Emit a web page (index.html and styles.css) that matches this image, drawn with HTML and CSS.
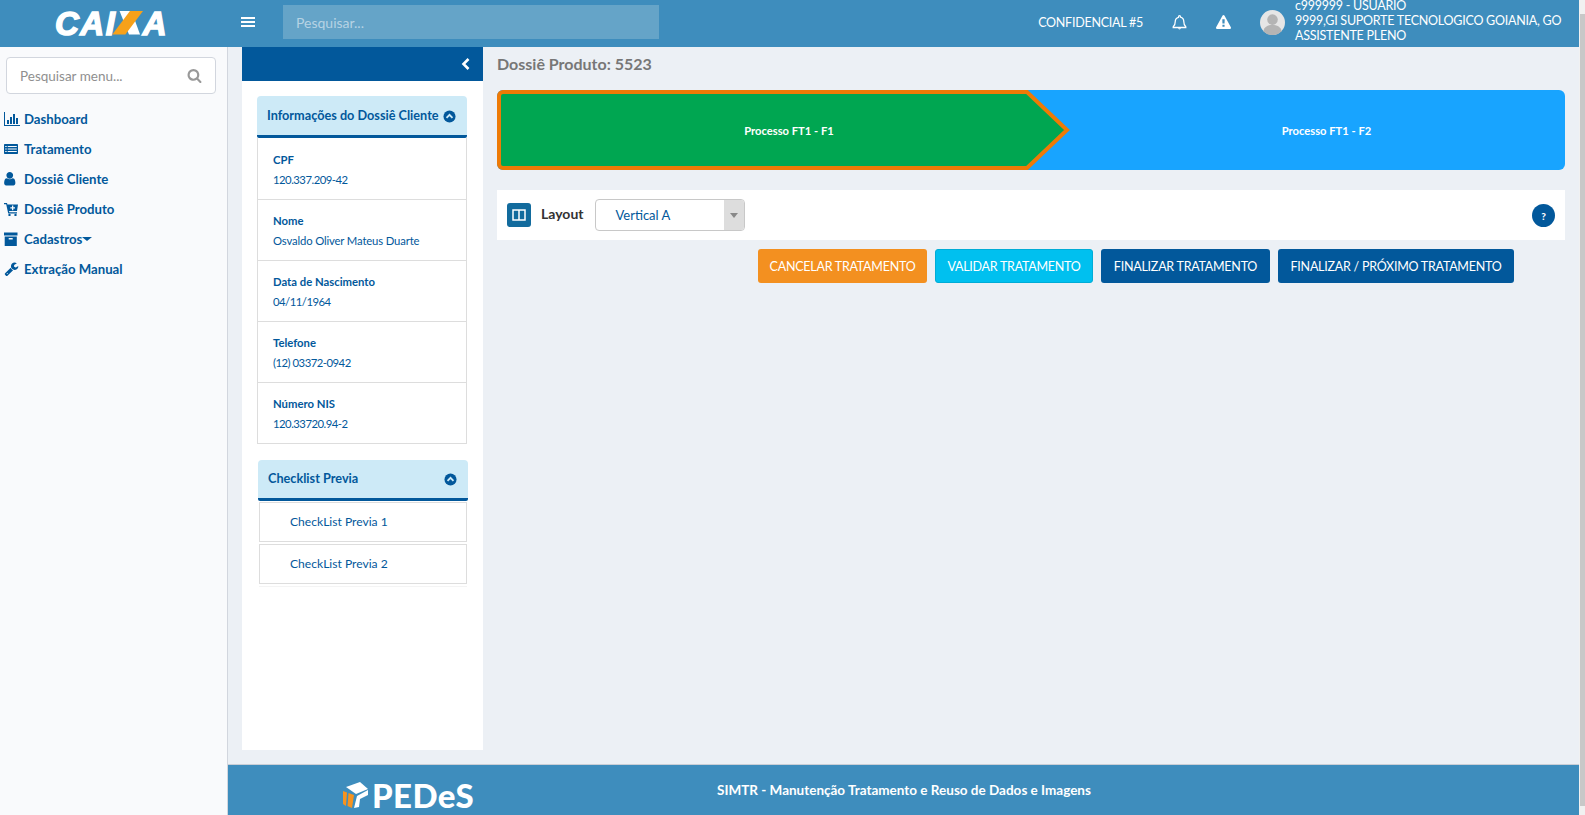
FILE: index.html
```html
<!DOCTYPE html>
<html lang="pt-BR">
<head>
    <meta charset="UTF-8">
    <meta name="viewport" content="width=device-width, initial-scale=1.0">
    <title>Dossiê Produto</title>
    <link rel="stylesheet" href="styles.css">
</head>
<body>
<div class="window">
    <div class="page">
        <header class="topbar">
            <div class="brand"><span class="brand-text">CAI<span class="brand-x">X</span>A</span></div>
            <button class="burger" type="button"><span></span><span></span><span></span></button>
            <input class="top-search" type="text" placeholder="Pesquisar...">
            <div class="top-right">
                <span class="confidencial">CONFIDENCIAL #5</span>
                <svg class="top-icon bell" viewBox="2 1.500 20 21"><path d="M12 2.500c.8 0 1.400.6 1.400 1.400v.5c3 .7 4.600 3.200 4.600 6.300 0 4 1 5.800 2.800 7.300v1H3.200v-1C5 16.700 6 14.900 6 11c0-3.100 1.600-5.600 4.600-6.300v-.5c0-.8.6-1.700 1.400-1.700z" fill="none" stroke="#fff" stroke-width="1.800"/><path d="M9.800 20a2.300 2.300 0 0 0 4.400 0z" fill="#fff"/></svg>
                <svg class="top-icon warn" viewBox="0 0 1792 1792"><path fill="#fff" d="M1024 1375v-190q0-14-9.500-23.500t-22.500-9.500h-192q-13 0-22.500 9.500t-9.500 23.500v190q0 14 9.500 23.500t22.500 9.500h192q13 0 22.500-9.500t9.500-23.500zm-2-374l18-459q0-12-10-19-13-11-24-11h-220q-11 0-24 11-10 7-10 21l17 457q0 10 10 16.500t24 6.500h185q14 0 23.500-6.500t10.500-16.500zm-14-934l768 1408q35 63-2 126-17 29-46.500 46t-63.500 17h-1536q-34 0-63.500-17t-46.500-46q-37-63-2-126l768-1408q17-31 47-49t65-18 65 18 47 49z"/></svg>
                <svg class="avatar" viewBox="0 0 26 26"><circle cx="13" cy="13" r="13" fill="#e6e6e6"/><circle cx="13" cy="10" r="5.500" fill="#b4b4b4"/><path d="M3.500 22c1-5 5-6.500 9.500-6.500s8.500 1.500 9.500 6.500a13 13 0 0 1-19 0z" fill="#b4b4b4"/></svg>
                <div class="user-info">
                    <div>c999999 - USUARIO</div>
                    <div>9999,GI SUPORTE TECNOLOGICO GOIANIA, GO</div>
                    <div>ASSISTENTE PLENO</div>
                </div>
            </div>
        </header>

        <div class="app">
            <aside class="sidebar">
                <div class="menu-search">
                    <input type="text" placeholder="Pesquisar menu...">
                    <svg viewBox="0 0 1792 1792"><path fill="#999" d="M1216 832q0-185-131.500-316.500t-316.500-131.500-316.500 131.500-131.500 316.500 131.500 316.500 316.500 131.500 316.500-131.500 131.500-316.500zm512 832q0 52-38 90t-90 38q-54 0-90-38l-343-342q-179 124-399 124-143 0-273.500-55.500t-225-150-150-225-55.500-273.500 55.500-273.500 150-225 225-150 273.500-55.500 273.500 55.500 225 150 150 225 55.500 273.500q0 220-124 399l343 343q37 37 37 90z"/></svg>
                </div>
                <ul class="menu">
                    <li><svg viewBox="0 0 16 14"><path d="M0 0h1v13h15v1H0z"/><path d="M3 8h2v4H3zM6 5h2v7H6zM9 2h2v10H9zM12 6h2v6h-2z"/></svg>Dashboard</li>
                    <li><svg viewBox="0 0 16 14"><path fill-rule="evenodd" d="M.800 2h12.400a.8.8 0 0 1 .8.8v8.400a.8.8 0 0 1-.8.8H.800a.8.8 0 0 1-.8-.8V2.800a.8.8 0 0 1 .8-.8zM1.200 4v1h1.500V4zm2.500 0v1h9.100V4zM1.200 6.500v1h1.500v-1zm2.500 0v1h9.100v-1zM1.200 9v1h1.500V9zm2.500 0v1h9.100V9z"/></svg>Tratamento</li>
                    <li><svg viewBox="256 128 1792 1600"><path d="M1536 1399q0 109-62.500 187t-150.500 78h-854q-88 0-150.500-78t-62.500-187q0-85 8.500-160.500t31.500-152 58.500-131 94-89 134.500-34.500q131 128 313 128t313-128q76 0 134.500 34.500t94 89 58.500 131 31.500 152 8.500 160.500zm-256-887q0 159-112.500 271.500t-271.500 112.500-271.500-112.500-112.500-271.500 112.500-271.500 271.500-112.500 271.500 112.500 112.500 271.500z"/></svg>Dossiê Cliente</li>
                    <li><svg viewBox="0 0 16 14"><path fill-rule="evenodd" d="M0 1h3l.4 1.500H14l-1 6.500H5l.3 1.300H13v1.200H4.200L2.200 2.300H0zM8 3.500v1.700H6.300v1.300H8v1.700h1.300V6.500H11V5.200H9.300V3.500z"/><circle cx="5.500" cy="13" r="1.200"/><circle cx="11.500" cy="13" r="1.200"/></svg>Dossiê Produto</li>
                    <li><svg viewBox="0 0 16 14"><path fill-rule="evenodd" d="M0 .500h13.500v3H0zM.700 4.500h12.100V14H.700zM4.700 6v1.500h4V6z"/></svg>Cadastros<span class="caret"></span></li>
                    <li><svg viewBox="64 64 1792 1700"><path d="M448 1472q0-26-19-45t-45-19-45 19-19 45 19 45 45 19 45-19 19-45zm644-420l-682 682q-37 37-90 37-52 0-91-37l-106-108q-38-36-38-90 0-53 38-91l681-681q39 98 114.500 173.500t173.500 114.500zm634-435q0 39-23 106-47 134-164.500 217.500t-258.500 83.500q-185 0-316.500-131.500t-131.500-316.500 131.500-316.500 316.500-131.500q58 0 121.500 16.500t107.500 46.500q16 11 16 28t-16 28l-293 169v224l193 107q5-3 79-48.500t135.500-81 70.500-35.500q15 0 23.500 10t8.500 25z"/></svg>Extração Manual</li>
                </ul>
            </aside>

            <div class="workspace">
                <div class="work-row">
                    <section class="panel">
                        <div class="panel-bar"><svg viewBox="0 0 10 14"><path d="M7.500 2 2.500 7l5 5" fill="none" stroke="#fff" stroke-width="2.600"/></svg></div>
                        <div class="panel-body">
                            <div class="acc-head">
                                <span>Informações do Dossiê Cliente</span>
                                <svg class="chevron" viewBox="0 0 14 14"><circle cx="7" cy="7" r="6.500"/><path d="M3.800 8.500 7 5.300l3.200 3.200" fill="none" stroke="#cdeaf7" stroke-width="2"/></svg>
                            </div>
                            <dl class="info">
                                <div class="info-row"><dt>CPF</dt><dd class="num">120.337.209-42</dd></div>
                                <div class="info-row"><dt>Nome</dt><dd>Osvaldo Oliver Mateus Duarte</dd></div>
                                <div class="info-row"><dt>Data de Nascimento</dt><dd class="num">04/11/1964</dd></div>
                                <div class="info-row"><dt>Telefone</dt><dd class="num">(12) 03372-0942</dd></div>
                                <div class="info-row"><dt>Número NIS</dt><dd class="num">120.33720.94-2</dd></div>
                            </dl>
                            <div class="acc-head checklist-head">
                                <span>Checklist Previa</span>
                                <svg class="chevron" viewBox="0 0 14 14"><circle cx="7" cy="7" r="6.500"/><path d="M3.800 8.500 7 5.300l3.200 3.200" fill="none" stroke="#cdeaf7" stroke-width="2"/></svg>
                            </div>
                            <ul class="checklist">
                                <li>CheckList Previa 1</li>
                                <li>CheckList Previa 2</li>
                            </ul>
                        </div>
                    </section>

                    <main class="main">
                        <h1 class="title">Dossiê Produto: 5523</h1>
                        <div class="stepper">
                            <div class="step step-active">
                                <svg class="step-arrow" viewBox="0 0 574 80"><path d="M6 2H530L570 40 530 78H6a4 4 0 0 1-4-4V6a4 4 0 0 1 4-4z" fill="#00a651" stroke="#ee7a06" stroke-width="4"/></svg>
                                <span class="step-label">Processo FT1 - F1</span>
                            </div>
                            <div class="step step-next"><span class="step-label">Processo FT1 - F2</span></div>
                        </div>
                        <div class="layout-bar">
                            <span class="layout-icon"><svg viewBox="0 0 14 12"><path d="M1 1h12v10H1zM7 1v10" fill="none" stroke="#fff" stroke-width="1.500"/></svg></span>
                            <label class="layout-label">Layout</label>
                            <div class="select"><span>Vertical A</span><span class="select-arrow"></span></div>
                            <span class="help">?</span>
                        </div>
                        <div class="actions">
                            <button class="btn btn-cancel" type="button">CANCELAR TRATAMENTO</button>
                            <button class="btn btn-validate" type="button">VALIDAR TRATAMENTO</button>
                            <button class="btn btn-finish" type="button">FINALIZAR TRATAMENTO</button>
                            <button class="btn btn-finish btn-next" type="button">FINALIZAR / PRÓXIMO TRATAMENTO</button>
                        </div>
                    </main>
                </div>
                <footer class="footer">
                    <div class="footer-logo">
                        <svg viewBox="0 0 26 26"><path d="M3 5 17 0l8 7-12 5z" fill="#fff"/><path d="M0 9l4 1.500L3 24l-3-2zM5.500 11 11 13 9 26l-4.500-2z" fill="#f7931e"/><path d="M14 14 25 8v5l-8 4-1 8-5 1z" fill="#fff"/></svg>
                        <span>PEDeS</span>
                    </div>
                    <div class="footer-text">SIMTR - Manutenção Tratamento e Reuso de Dados e Imagens</div>
                </footer>
            </div>
        </div>
    </div>
    <div class="scrollbar"><div class="scroll-thumb"></div></div>
</div>
</body>
</html>
```

FILE: styles.css
```css
html, body {
    margin: 0;
    height: 100%;
    overflow: hidden;
}

body {
    font-family: "Lato", "Open Sans", sans-serif;
    font-size: 13px;
    color: #02589b;
}

ul, dl, dd, h1 {
    margin: 0;
    padding: 0;
    list-style: none;
}

.window {
    display: flex;
    height: 815px;
}

.page {
    flex: 1;
    min-width: 0;
    display: flex;
    flex-direction: column;
}

.scrollbar {
    width: 6px;
    padding: 14px 0 0 1px;
    box-sizing: border-box;
    background-color: #f1f1f1;
}

.scroll-thumb {
    height: 792px;
    background-color: #c8c8c8;
}

/* top bar */
.topbar {
    height: 47px;
    flex: none;
    box-sizing: border-box;
    padding-bottom: 3px;
    display: flex;
    align-items: center;
    background-color: #3e8dbd;
    color: #fff;
}

.brand {
    width: 226px;
    padding: 3px 0 0 55px;
    box-sizing: border-box;
    flex: none;
}

.brand-text {
    font-family: "Liberation Sans", sans-serif;
    font-size: 33px;
    line-height: 40px;
    font-weight: bold;
    font-style: italic;
    letter-spacing: 1.500px;
    -webkit-text-stroke: 1.500px #fff;
    display: block;
}

/* the X of the logo is two bars, white under orange */
.brand-x {
    position: relative;
    margin-left: 3px;
    color: transparent;
    -webkit-text-stroke: 0 transparent;
}

.brand-x::before,
.brand-x::after {
    content: "";
    position: absolute;
    top: 6px;
    height: 24px;
}

.brand-x::before {
    left: 0;
    width: 23px;
    background-color: #fff;
    clip-path: polygon(0 0, 52% 0, 90% 100%, 42% 100%);
}

.brand-x::after {
    left: -7px;
    width: 31px;
    background-color: #f7a11a;
    clip-path: polygon(58% 0, 100% 0, 42% 100%, 0 100%);
}

.burger {
    width: 14px;
    margin-left: 15px;
    padding: 0;
    background: none;
    border: none;
    display: flex;
    flex-direction: column;
    gap: 2px;
}

.burger span {
    height: 2px;
    background-color: #fff;
}

.top-search {
    width: 376px;
    height: 34px;
    margin-left: 28px;
    padding: 0 13px;
    box-sizing: border-box;
    border: none;
    outline: none;
    background-color: #65a4c8;
    font: inherit;
    font-size: 14px;
    color: #fff;
}

.top-search::placeholder {
    color: #b6d3e4;
}

.top-right {
    margin-left: auto;
    display: flex;
    align-items: center;
}

.confidencial {
    font-size: 12.500px;
    letter-spacing: -0.250px;
    margin-right: 29px;
}

.top-icon {
    width: 15px;
    height: 15px;
    margin-right: 29px;
}

.avatar {
    width: 25px;
    height: 25px;
    margin-right: 10px;
}

.user-info {
    width: 284px;
    font-size: 12.500px;
    letter-spacing: -0.250px;
    line-height: 15px;
    margin-top: -4px;
    white-space: nowrap;
}

/* sidebar */
.app {
    flex: 1;
    display: flex;
    min-height: 0;
}

.sidebar {
    width: 228px;
    flex: none;
    box-sizing: border-box;
    background-color: #f9fafc;
    border-right: 1px solid #d2d6de;
    padding: 10px 0 0 0;
}

.menu-search {
    position: relative;
    width: 210px;
    height: 37px;
    margin-left: 6px;
}

.menu-search input {
    width: 100%;
    height: 100%;
    box-sizing: border-box;
    padding: 0 13px;
    border: 1px solid #d2d6de;
    border-radius: 4px;
    outline: none;
    font: inherit;
    font-size: 13.500px;
    background-color: #fff;
}

.menu-search input::placeholder {
    color: #8f8f8f;
}

.menu-search svg {
    position: absolute;
    right: 14px;
    top: 11px;
    width: 15px;
    height: 15px;
}

.menu {
    margin-top: 10px;
}

.menu li {
    height: 30px;
    display: flex;
    align-items: center;
    padding-left: 4px;
    font-size: 13.200px;
    font-weight: 700;
    color: #02589b;
}

.menu svg {
    width: 16px;
    height: 14px;
    margin-right: 4px;
    fill: #02589b;
    flex: none;
}

.caret {
    width: 0;
    height: 0;
    border-left: 5px solid transparent;
    border-right: 5px solid transparent;
    border-top: 4px solid #02589b;
}

/* work area */
.workspace {
    flex: 1;
    min-width: 0;
    display: flex;
    flex-direction: column;
    background-color: #ecf0f5;
}

.work-row {
    flex: 1;
    min-height: 0;
    display: flex;
    padding: 0 0 14px 14px;
}

.panel {
    width: 241px;
    flex: none;
    background-color: #fff;
}

.panel-bar {
    height: 34px;
    background-color: #02589b;
    display: flex;
    align-items: center;
    justify-content: flex-end;
    padding-right: 12px;
}

.panel-bar svg {
    width: 10px;
    height: 14px;
}

.panel-body {
    padding: 15px 15px 0 15px;
}

.acc-head {
    height: 42px;
    box-sizing: border-box;
    width: 210px;
    padding: 0 11px 2px 10px;
    display: flex;
    align-items: center;
    justify-content: space-between;
    background-color: #cdeaf7;
    border-bottom: 3px solid #02589b;
    border-radius: 4px 4px 2px 2px;
    font-size: 12.700px;
    font-weight: 700;
}

.chevron {
    width: 13px;
    height: 13px;
    margin-top: 3px;
    flex: none;
    fill: #02589b;
}

.info {
    width: 210px;
    box-sizing: border-box;
    border: 1px solid #ddd;
    border-top: none;
}

.info-row {
    height: 61px;
    box-sizing: border-box;
    padding: 13px 15px 0;
    border-bottom: 1px solid #ddd;
}

.info-row:first-child {
    height: 62px;
    padding-top: 14px;
}

.info-row:last-child {
    height: 60px;
    border-bottom: none;
}

.info-row dt {
    font-size: 11.300px;
    line-height: 16px;
    font-weight: 700;
}

.info-row dd {
    font-size: 11.300px;
    letter-spacing: -0.150px;
    line-height: 16px;
    margin-top: 4px;
}

.info-row .num {
    letter-spacing: -0.500px;
}

.checklist-head {
    height: 41px;
    margin-top: 16px;
    margin-left: 1px;
}

.checklist {
    margin: 1px 0 0 2px;
    width: 208px;
    border-bottom: 1px solid #f4f4f4;
}

.checklist li {
    height: 40px;
    box-sizing: border-box;
    border: 1px solid #ddd;
    margin-bottom: 2px;
    padding-left: 30px;
    font-size: 12.100px;
    line-height: 38px;
}

/* main column */
.main {
    flex: 1;
    min-width: 0;
    padding: 0 14px 0 14px;
}

.title {
    font-size: 16px;
    line-height: 20px;
    font-weight: 700;
    color: #777;
    margin: 7px 0 16px;
}

.stepper {
    display: flex;
    height: 80px;
    border-radius: 6px;
    background-color: #18a4ff;
    color: #fff;
    font-size: 11.200px;
    font-weight: 700;
}

.step {
    position: relative;
    display: flex;
    align-items: center;
    justify-content: center;
}

.step-active {
    width: 574px;
    padding-left: 10px;
    box-sizing: border-box;
}

.step-next {
    flex: 1;
    padding-left: 17px;
}

.step-arrow {
    position: absolute;
    left: 0;
    top: 0;
    width: 574px;
    height: 80px;
}

.step-label {
    position: relative;
}

.layout-bar {
    height: 50px;
    margin-top: 20px;
    padding: 0 10px 0 10px;
    display: flex;
    align-items: center;
    background-color: #fff;
}

.layout-icon {
    width: 24px;
    height: 24px;
    border-radius: 3px;
    background-color: #126b9d;
    display: flex;
    align-items: center;
    justify-content: center;
}

.layout-icon svg {
    width: 14px;
    height: 12px;
}

.layout-label {
    margin: 0 0 3px 10px;
    font-size: 14px;
    font-weight: 700;
    color: #333;
}

.select {
    width: 150px;
    height: 32px;
    margin-left: 12px;
    box-sizing: border-box;
    border: 1px solid #c8c8c8;
    border-radius: 4px;
    padding-left: 19px;
    display: flex;
    align-items: center;
    font-size: 13px;
    overflow: hidden;
}

.select-arrow {
    margin-left: auto;
    width: 20px;
    height: 100%;
    background-color: #ddd;
    position: relative;
}

.select-arrow::after {
    content: "";
    position: absolute;
    left: 6px;
    top: 13px;
    border-left: 4px solid transparent;
    border-right: 4px solid transparent;
    border-top: 5px solid #888;
}

.help {
    margin: 1px 0 0 auto;
    width: 23px;
    height: 23px;
    border-radius: 50%;
    background-color: #02589b;
    color: #fff;
    font-size: 10px;
    font-weight: 900;
    display: flex;
    align-items: center;
    justify-content: center;
}

.actions {
    display: flex;
    gap: 8px;
    margin: 9px 0 0 261px;
}

.btn {
    height: 34px;
    padding: 0;
    border: 1px solid transparent;
    border-radius: 3px;
    font-family: inherit;
    font-size: 12.500px;
    letter-spacing: -0.250px;
    white-space: nowrap;
    color: #fff;
    cursor: pointer;
}

.btn-cancel {
    width: 169px;
    background-color: #f39020;
}

.btn-validate {
    width: 158px;
    background-color: #00c0ef;
    border-color: #00acd6;
}

.btn-finish {
    width: 169px;
    background-color: #02589b;
}

.btn-next {
    width: 236px;
}

/* footer */
.footer {
    height: 51px;
    flex: none;
    display: flex;
    align-items: center;
    background-color: #3e8dbd;
    border-top: 1px solid #c9ced6;
    box-sizing: border-box;
    color: #fff;
}

.footer-logo {
    margin: 10px 0 0 115px;
    width: 132px;
    flex: none;
    display: flex;
    align-items: center;
    gap: 3px;
}

.footer-logo svg {
    width: 26px;
    height: 26px;
}

.footer-logo span {
    font-size: 33px;
    font-weight: 900;
    line-height: 34px;
    letter-spacing: 0.400px;
}

.footer-text {
    margin-left: 242px;
    font-size: 13.500px;
    font-weight: 700;
}
```
